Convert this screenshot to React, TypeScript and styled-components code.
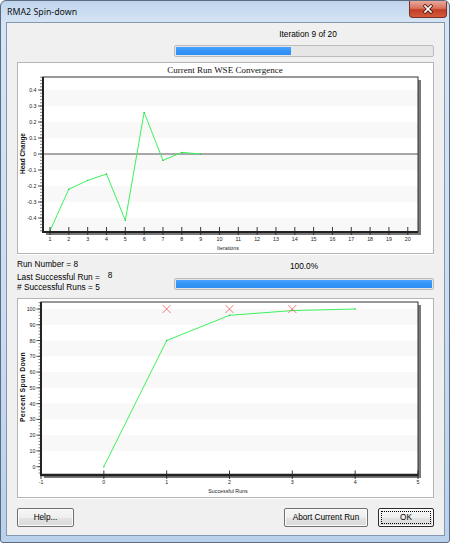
import React from "react";
import styled, { createGlobalStyle } from "styled-components";

const SANS = `"Liberation Sans", Arial, sans-serif`;

const GlobalStyle = createGlobalStyle`
  html, body { margin: 0; padding: 0; background: #ffffff; }
  body { font-family: ${SANS}; }
`;

const Window = styled.div`
  box-sizing: border-box;
  width: 450px;
  height: 543px;
  border: 1px solid #5b6c82;
  border-radius: 6px 6px 3px 3px;
  background: linear-gradient(to bottom, #bfd4ec 0px, #d6e5f5 22px, #c9dcf1 60%, #b9d1ec 100%);
  display: flex;
  flex-direction: column;
  overflow: hidden;
`;

const TitleBar = styled.div`
  height: 21px;
  display: flex;
  align-items: flex-start;
  justify-content: space-between;
  padding-left: 6px;
`;

const TitleText = styled.span`
  font-family: "Noto Sans", "Open Sans", sans-serif;
  font-size: 8.8px;
  line-height: 22px;
  color: #111;
`;

const CloseButton = styled.div`
  box-sizing: border-box;
  width: 38px;
  height: 17px;
  margin-right: 2px;
  border: 1px solid #7a2f22;
  border-top: none;
  border-radius: 0 0 4px 4px;
  background: linear-gradient(to bottom, #e9a99b 0%, #d8735f 45%, #c23e26 55%, #d45a3d 100%);
  display: flex;
  align-items: center;
  justify-content: center;
`;

const Client = styled.div`
  box-sizing: border-box;
  height: 514px;
  margin: 0 4px 0 5px;
  border: 1px solid #8497ae;
  background: #f0f0f0;
  padding: 0 10px 0 10px;
  display: flex;
  flex-direction: column;
`;

const TopSection = styled.div`
  padding-left: 157px;
  display: flex;
  flex-direction: column;
`;

const CenterLabel = styled.div<{ $shift?: number }>`
  font-size: 8.3px;
  line-height: 11px;
  color: #000;
  text-align: center;
  padding-left: ${(p) => p.$shift ?? 0}px;
`;

const Track = styled.div`
  box-sizing: border-box;
  height: 12px;
  border: 1px solid #bcbcbc;
  border-radius: 2px;
  background: #e6e6e6;
  padding: 1px;
`;

const Fill = styled.div`
  height: 100%;
  background: linear-gradient(to bottom, #4aa3ff 0%, #3394f7 50%, #2f8ef2 100%);
`;

const Panel = styled.div<{ $h: number }>`
  box-sizing: border-box;
  height: ${(p) => p.$h}px;
  background: #ffffff;
  border: 1px solid #b4b4b4;
  box-shadow: 0 1px 0 #ffffff;
  overflow: hidden;
`;

const ChartSvg = styled.svg`
  display: block;
`;

const InfoRow = styled.div`
  height: 44px;
  display: grid;
  grid-template-columns: 157px 1fr;
`;

const Stats = styled.div`
  padding-top: 5px;
  font-size: 8.3px;
  line-height: 11px;
  color: #000;
`;

const StatLine = styled.div<{ $h?: number }>`
  height: ${(p) => p.$h ?? 11}px;
  white-space: nowrap;
`;

const StatValue = styled.span`
  margin-left: 8px;
  vertical-align: 2px;
`;

const RightInfo = styled.div`
  padding-top: 7px;
  display: flex;
  flex-direction: column;
  gap: 6px;
`;

const ButtonRow = styled.div`
  margin-top: 10px;
  display: flex;
  gap: 10px;
`;

const Button = styled.button<{ $w: number; $default?: boolean; $push?: boolean }>`
  box-sizing: border-box;
  position: relative;
  width: ${(p) => p.$w}px;
  height: 19px;
  padding: 0;
  margin-left: ${(p) => (p.$push ? "auto" : "0")};
  font-family: ${SANS};
  font-size: 8.2px;
  color: #000;
  border: 1px solid ${(p) => (p.$default ? "#2b2b2b" : "#707070")};
  border-radius: 2px;
  background: linear-gradient(to bottom, #f6f6f6 0%, #efefef 50%, #e3e3e3 51%, #dadada 100%);
  box-shadow: inset 0 0 0 1px #fbfbfb;
  &::after {
    content: "";
    display: ${(p) => (p.$default ? "block" : "none")};
    position: absolute;
    inset: 2px;
    border: 1px dotted #000;
  }
`;

/* ---------------- Chart 1 ---------------- */
const cx1 = (i: number) => 50 + (i - 1) * 18.83;
const cy1 = (v: number) => 154 - v * 160;
const headData = [-0.48, -0.22, -0.165, -0.125, -0.415, 0.26, -0.04, 0.01, 0.0];

const ConvergenceChart: React.FC = () => {
  const x0 = 43, x1 = 418, y0 = 77, y1 = 232;
  const bands = [0.4, 0.2, 0.0, -0.2, -0.4];
  const minor: number[] = [];
  for (let k = -24; k <= 24; k++) minor.push(k * 0.02);
  const major: number[] = [-0.4, -0.3, -0.2, -0.1, 0, 0.1, 0.2, 0.3, 0.4];
  const xs = Array.from({ length: 20 }, (_, i) => i + 1);
  const pts = headData.map((v, i) => `${cx1(i + 1)},${cy1(v)}`).join(" ");
  return (
    <ChartSvg width={414} height={190} viewBox="18 63 414 190">
      <text x={225} y={73} textAnchor="middle" fontFamily='"Liberation Serif", serif' fontSize={9} fill="#111">
        Current Run WSE Convergence
      </text>
      <rect x={x0 + 3} y={y0 + 3} width={x1 - x0} height={y1 - y0} fill="#7a7a7a" />
      <rect x={x0} y={y0} width={x1 - x0} height={y1 - y0} fill="#ffffff" />
      {bands.map((b) => {
        const top = Math.max(cy1(b), y0);
        const bot = Math.min(cy1(b - 0.1), y1);
        return <rect key={b} x={x0} y={top} width={x1 - x0} height={bot - top} fill="#f8f8f8" />;
      })}
      <line x1={x0} x2={x1} y1={154} y2={154} stroke="#555" strokeWidth={1.2} />
      <polyline points={pts} fill="none" stroke="#3cf25a" strokeWidth={1} />
      {headData.map((v, i) => (
        <circle key={i} cx={cx1(i + 1)} cy={cy1(v)} r={0.7} fill="#2cc048" />
      ))}
      <rect x={x0} y={y0} width={x1 - x0} height={y1 - y0} fill="none" stroke="#333" strokeWidth={1} />
      <line x1={x0} x2={x0} y1={y0} y2={y1 + 1} stroke="#222" strokeWidth={2} />
      <line x1={x0} x2={x1} y1={y1} y2={y1} stroke="#222" strokeWidth={2} />
      {minor.map((v) => (
        <line key={v} x1={40} x2={x0} y1={cy1(v)} y2={cy1(v)} stroke="#333" strokeWidth={0.6} />
      ))}
      {major.map((v) => (
        <g key={v}>
          <line x1={38} x2={x0} y1={cy1(v)} y2={cy1(v)} stroke="#222" strokeWidth={0.8} />
          <text x={36.5} y={cy1(v) + 2} textAnchor="end" fontFamily={SANS} fontSize={5.3} fill="#222">
            {v === 0 ? "0" : v.toFixed(1)}
          </text>
        </g>
      ))}
      {xs.map((i) => (
        <g key={i}>
          <line x1={cx1(i)} x2={cx1(i)} y1={227} y2={235} stroke="#222" strokeWidth={0.9} />
          <text x={cx1(i)} y={241} textAnchor="middle" fontFamily={SANS} fontSize={5.3} fill="#222">
            {i}
          </text>
        </g>
      ))}
      <text x={228} y={249.5} textAnchor="middle" fontFamily={SANS} fontSize={5.3} fill="#222">
        Iterations
      </text>
      <text
        x={0}
        y={0}
        transform="translate(25 153.5) rotate(-90)"
        textAnchor="middle"
        fontFamily={SANS}
        fontSize={6.4}
        fontWeight="bold"
        fill="#111"
      >
        Head Change
      </text>
    </ChartSvg>
  );
};

/* ---------------- Chart 2 ---------------- */
const cx2 = (v: number) => 41 + (v + 1) * 62.83;
const cy2 = (v: number) => 466.7 - v * 1.577;
const spinData: [number, number][] = [
  [0, 0],
  [1, 80],
  [2, 96],
  [3, 99],
  [4, 100],
];
const failed = [1, 2, 3];

const SpinDownChart: React.FC = () => {
  const x0 = 41, x1 = 418, y0 = 302, y1 = 475;
  const bands = [20, 40, 60, 80, 100];
  const minor: number[] = [];
  for (let k = -4; k <= 104; k += 2) minor.push(k);
  const major = [0, 10, 20, 30, 40, 50, 60, 70, 80, 90, 100];
  const xs = [-1, 0, 1, 2, 3, 4, 5];
  const pts = spinData.map(([x, y]) => `${cx2(x)},${cy2(y)}`).join(" ");
  return (
    <ChartSvg width={414} height={198} viewBox="18 299 414 198">
      <rect x={x0 + 3} y={y0 + 3} width={x1 - x0} height={y1 - y0} fill="#7a7a7a" />
      <rect x={x0} y={y0} width={x1 - x0} height={y1 - y0} fill="#ffffff" />
      {bands.map((b) => {
        const top = Math.max(cy2(b), y0);
        const bot = Math.min(cy2(b - 10), y1);
        return <rect key={b} x={x0} y={top} width={x1 - x0} height={bot - top} fill="#f8f8f8" />;
      })}
      <polyline points={pts} fill="none" stroke="#3cf25a" strokeWidth={1} />
      {spinData.map(([x, y]) => (
        <circle key={x} cx={cx2(x)} cy={cy2(y)} r={0.7} fill="#2cc048" />
      ))}
      {failed.map((f) => {
        const px = cx2(f);
        const py = cy2(100);
        return (
          <g key={f} stroke="#f06a6a" strokeWidth={0.9}>
            <line x1={px - 4} y1={py - 4} x2={px + 4} y2={py + 4} />
            <line x1={px - 4} y1={py + 4} x2={px + 4} y2={py - 4} />
          </g>
        );
      })}
      <rect x={x0} y={y0} width={x1 - x0} height={y1 - y0} fill="none" stroke="#333" strokeWidth={1} />
      <line x1={x0} x2={x0} y1={y0} y2={y1 + 1} stroke="#222" strokeWidth={2} />
      <line x1={x0} x2={x1} y1={y1} y2={y1} stroke="#222" strokeWidth={2.4} />
      {minor.map((v) => (
        <line key={v} x1={38.5} x2={x0} y1={cy2(v)} y2={cy2(v)} stroke="#333" strokeWidth={0.6} />
      ))}
      {major.map((v) => (
        <g key={v}>
          <line x1={36.5} x2={x0} y1={cy2(v)} y2={cy2(v)} stroke="#222" strokeWidth={0.8} />
          <text x={35.5} y={cy2(v) + 2} textAnchor="end" fontFamily={SANS} fontSize={5.3} fill="#222">
            {v}
          </text>
        </g>
      ))}
      {xs.map((v) => (
        <g key={v}>
          <line x1={cx2(v)} x2={cx2(v)} y1={470.5} y2={479} stroke="#222" strokeWidth={0.9} />
          <text x={cx2(v)} y={484} textAnchor="middle" fontFamily={SANS} fontSize={5.3} fill="#222">
            {v}
          </text>
        </g>
      ))}
      <text x={228} y={492.5} textAnchor="middle" fontFamily={SANS} fontSize={5.3} fill="#222">
        Successful Runs
      </text>
      <text
        x={0}
        y={0}
        transform="translate(25 387) rotate(-90)"
        textAnchor="middle"
        fontFamily={SANS}
        fontSize={6.8}
        fontWeight="bold"
        letterSpacing={0.35}
        fill="#111"
      >
        Percent Spun Down
      </text>
    </ChartSvg>
  );
};

const CloseGlyph: React.FC = () => (
  <svg width="12" height="10" viewBox="0 0 12 10">
    <g strokeLinecap="square">
      <path d="M3 2 L9 8 M9 2 L3 8" stroke="#4a1d14" strokeWidth={3.2} />
      <path d="M3 2 L9 8 M9 2 L3 8" stroke="#ffffff" strokeWidth={1.7} />
    </g>
  </svg>
);

export default function App() {
  const iteration = 9;
  const totalIterations = 20;
  const runPercent = 100;
  return (
    <>
      <GlobalStyle />
      <Window>
        <TitleBar>
          <TitleText>RMA2 Spin-down</TitleText>
          <CloseButton>
            <CloseGlyph />
          </CloseButton>
        </TitleBar>
        <Client>
          <TopSection>
            <CenterLabel $shift={8} style={{ marginTop: 6 }}>
              Iteration {iteration} of {totalIterations}
            </CenterLabel>
            <Track style={{ marginTop: 5 }}>
              <Fill style={{ width: `${(iteration / totalIterations) * 100}%` }} />
            </Track>
          </TopSection>
          <Panel $h={192} style={{ marginTop: 5 }}>
            <ConvergenceChart />
          </Panel>
          <InfoRow>
            <Stats>
              <StatLine $h={10.5}>Run Number = 8</StatLine>
              <StatLine $h={12.5}>
                Last Successful Run =<StatValue>8</StatValue>
              </StatLine>
              <StatLine>
                # Successful Runs = 5
              </StatLine>
            </Stats>
            <RightInfo>
              <CenterLabel>{runPercent.toFixed(1)}%</CenterLabel>
              <Track>
                <Fill style={{ width: `${runPercent}%` }} />
              </Track>
            </RightInfo>
          </InfoRow>
          <Panel $h={200}>
            <SpinDownChart />
          </Panel>
          <ButtonRow>
            <Button $w={57}>Help...</Button>
            <Button $w={84} $push>
              Abort Current Run
            </Button>
            <Button $w={56} $default>
              OK
            </Button>
          </ButtonRow>
        </Client>
      </Window>
    </>
  );
}
